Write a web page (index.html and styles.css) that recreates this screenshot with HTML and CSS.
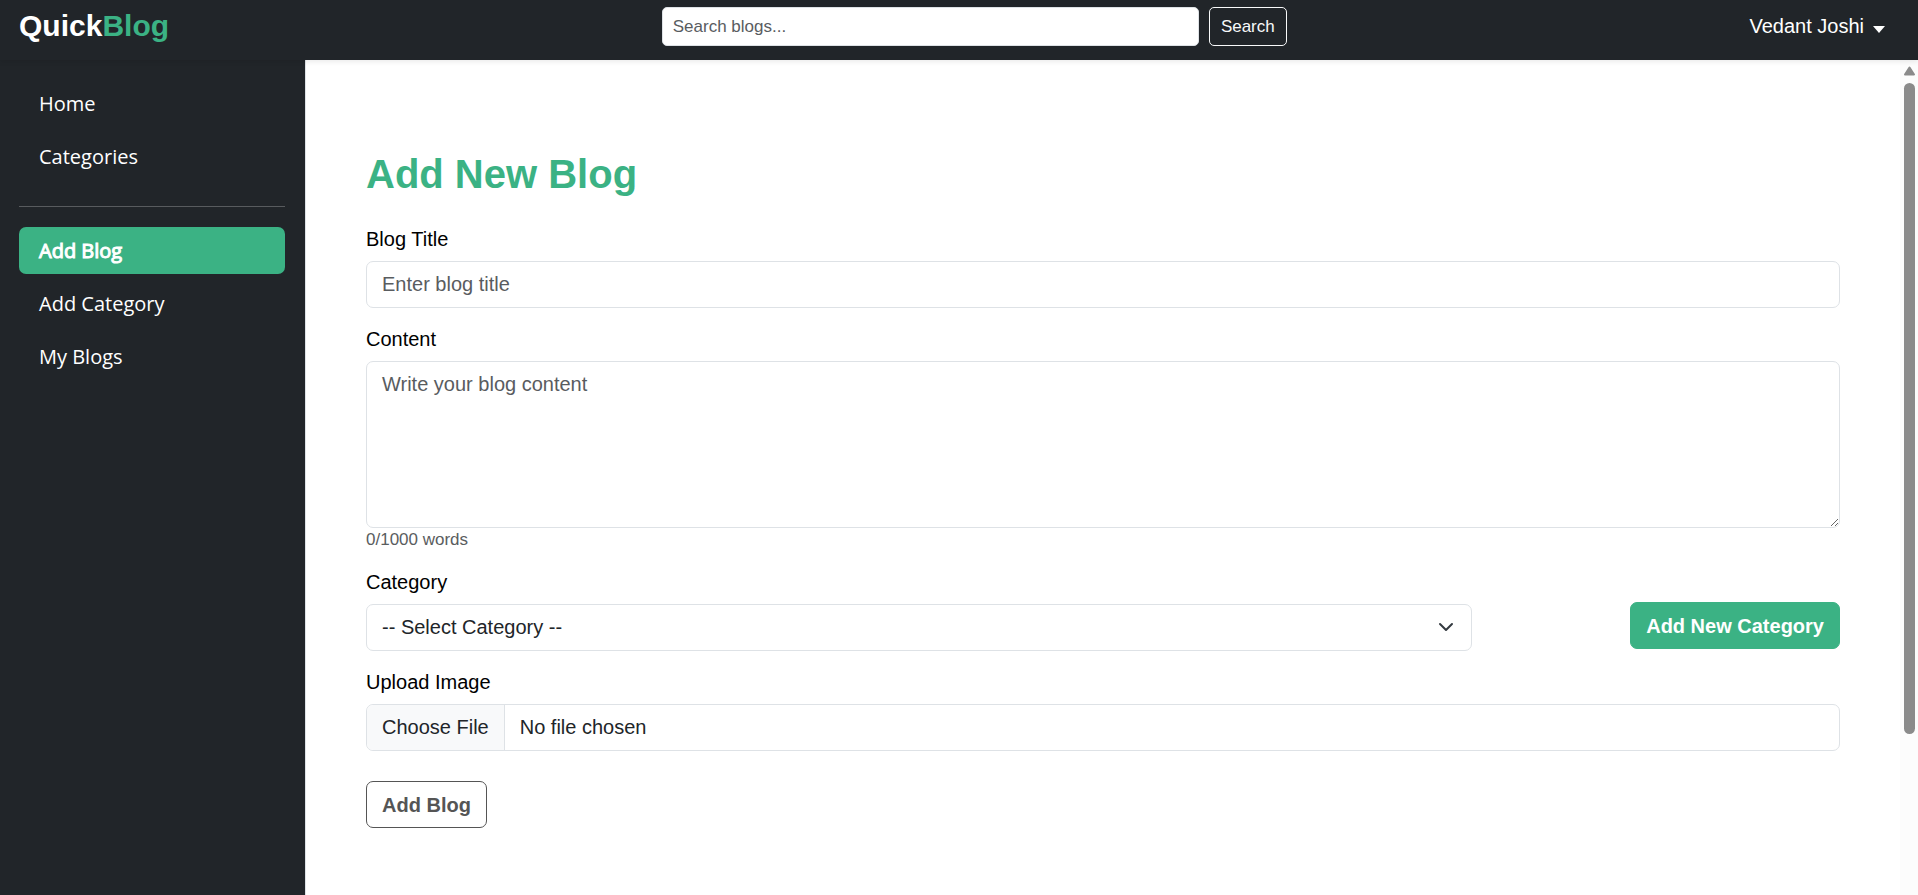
FILE: index.html
```html
<!DOCTYPE html>
<html lang="en">
<head>
<meta charset="utf-8">
<meta name="viewport" content="width=device-width, initial-scale=1">
<title>QuickBlog</title>
<link rel="stylesheet" href="styles.css">
</head>
<body>
<header class="topbar">
  <a class="brand" href="#">Quick<span class="brand-accent">Blog</span></a>
  <form class="search" role="search">
    <input class="search-input" type="search" placeholder="Search blogs..." aria-label="Search blogs">
    <button class="search-button" type="submit">Search</button>
  </form>
  <button class="user-menu" type="button">Vedant Joshi<span class="caret"></span></button>
</header>
<div class="shell">
  <nav class="sidebar">
    <a class="nav-link" href="#">Home</a>
    <a class="nav-link" href="#">Categories</a>
    <hr class="divider">
    <a class="nav-link active" href="#" aria-current="page">Add Blog</a>
    <a class="nav-link" href="#">Add Category</a>
    <a class="nav-link" href="#">My Blogs</a>
  </nav>
  <main class="content">
    <h1 class="title">Add New Blog</h1>
    <form>
      <div class="field">
        <label class="label" for="blog-title">Blog Title</label>
        <input class="control" id="blog-title" type="text" placeholder="Enter blog title">
      </div>
      <div class="field">
        <label class="label" for="blog-content">Content</label>
        <textarea class="control area" id="blog-content" rows="5" placeholder="Write your blog content"></textarea>
        <small class="hint">0/1000 words</small>
      </div>
      <div class="field category-row">
        <div class="category">
          <label class="label" for="category">Category</label>
          <div class="select-wrap">
            <select class="control select" id="category">
              <option>-- Select Category --</option>
            </select>
            <svg class="chevron" viewBox="0 0 16 16" aria-hidden="true"><path d="m2 5 6 6 6-6"/></svg>
          </div>
        </div>
        <button class="button primary" type="button">Add New Category</button>
      </div>
      <div class="field">
        <label class="label" for="image">Upload Image</label>
        <input class="control file" id="image" type="file">
      </div>
      <button class="button outline" type="submit">Add Blog</button>
    </form>
  </main>
  <div class="scrollbar" aria-hidden="true">
    <svg class="scroll-arrow" viewBox="0 0 12 10"><path d="M6 1.5 10.5 8.5h-9z"/></svg>
    <div class="scroll-thumb"></div>
  </div>
</div>
</body>
</html>
```

FILE: styles.css
```css
* { box-sizing: border-box; }

body {
  display: flex;
  flex-direction: column;
  height: 100vh;
  margin: 0;
  overflow: hidden;
  background: #fff;
  color: #000;
  font: 20px/30px "Liberation Sans", Arial, sans-serif;
}

button, input, select, textarea { font: inherit; }
a { text-decoration: none; }

.topbar {
  position: relative;
  z-index: 1;
  display: flex;
  flex: none;
  align-items: center;
  justify-content: space-between;
  height: 60px;
  padding: 0 33px 7px 19px;
  background: #212529;
  box-shadow: 0 2px 5px rgba(0, 0, 0, 0.08);
}

.brand, .user-menu { margin-bottom: 2px; }
.brand {
  margin-right: 30px;
  color: #fff;
  font-size: 30px;
  font-weight: 700;
}
.brand-accent { color: #3bb284; }

.search {
  display: flex;
  flex: 0 1 625px;
  gap: 10px;
}
.search-input {
  flex: 1;
  min-width: 0;
  height: 39px;
  padding: 0 10px;
  border: 1px solid #dee2e6;
  border-radius: 5px;
  background: #fff;
  color: #212529;
  font-size: 17px;
  outline: 0;
  appearance: none;
}
.search-input::placeholder, .control::placeholder { color: #595c5f; opacity: 1; }
.search-button {
  height: 39px;
  padding: 0 11px;
  border: 1px solid #f8f9fa;
  border-radius: 5px;
  background: transparent;
  color: #f8f9fa;
  font-size: 17px;
}

.user-menu {
  display: flex;
  align-items: center;
  gap: 9px;
  padding: 0;
  border: 0;
  background: none;
  color: #fff;
}
.caret {
  margin-top: 8px;
  border: 6px solid transparent;
  border-top: 7px solid #fff;
  border-bottom: 0;
}

.shell {
  display: flex;
  flex: 1;
  min-height: 0;
}

.sidebar {
  display: flex;
  flex: 0 0 306px;
  flex-direction: column;
  gap: 6px;
  padding: 20px 20px 20px 19px;
  border-right: 1px solid #dee2e6;
  background: #212529;
  font-family: "Open Sans", "Noto Sans", sans-serif;
}
.nav-link {
  padding: 10px 20px;
  border-radius: 7px;
  color: #fff;
  line-height: 27px;
}
.nav-link.active {
  background: #3bb284;
  -webkit-text-stroke: 1px #fff;
}
.divider {
  width: 100%;
  margin: 20px 0 14px;
  border: 0;
  border-top: 1px solid #585b5e;
}

.content {
  flex: 1;
  min-width: 0;
  padding: 90px 60px 60px;
}
.title {
  margin: 0 0 26px;
  color: #3bb284;
  font-size: 40px;
  line-height: 48px;
}

.field { margin-bottom: 16px; }
.label {
  display: block;
  margin-bottom: 7px;
}
.control {
  display: block;
  width: 100%;
  height: 47px;
  padding: 7px 15px;
  border: 1px solid #dee2e6;
  border-radius: 7px;
  background: #fff;
  color: #212529;
  outline: 0;
}
.area {
  height: 167px;
  resize: vertical;
}
.hint {
  display: block;
  color: #5a5d60;
  font-size: 17px;
  line-height: 23px;
}

.category-row {
  display: flex;
  align-items: flex-end;
  justify-content: space-between;
}
.category { width: 75%; }
.select-wrap { position: relative; }
.select {
  padding-top: 6px;
  padding-bottom: 8px;
  appearance: none;
}
.chevron {
  position: absolute;
  top: 15px;
  right: 18px;
  width: 16px;
  height: 16px;
  fill: none;
  stroke: #343a40;
  stroke-width: 2;
  stroke-linecap: round;
  stroke-linejoin: round;
  pointer-events: none;
}

.file {
  padding: 6px 15px 8px 0;
  line-height: 30px;
}
.file::file-selector-button {
  height: 45px;
  margin: -6px 15px -8px 0;
  padding: 0 15px 2px;
  border: 0;
  border-right: 1px solid #dee2e6;
  border-radius: 6px 0 0 6px;
  background: #f8f9fa;
  color: #212529;
  font: inherit;
}

.button {
  height: 47px;
  padding: 0 15px;
  border: 1px solid;
  border-radius: 7px;
  font-weight: 700;
}
.primary {
  margin-bottom: 2px;
  border-color: #3bb284;
  background: #3bb284;
  color: #fff;
}
.outline {
  margin-top: 14px;
  border-color: #555;
  background: #fff;
  color: #555;
}

.scrollbar {
  display: flex;
  flex: 0 0 18px;
  flex-direction: column;
  align-items: center;
  gap: 7px;
  padding: 6px 0 161px 1px;
  background: #fcfcfc;
}
.scroll-arrow {
  flex: none;
  width: 13px;
  height: 10px;
  fill: #8b8b8b;
  stroke: #8b8b8b;
  stroke-width: 2;
  stroke-linejoin: round;
}
.scroll-thumb {
  flex: 1;
  width: 11px;
  border-radius: 6px;
  background: #8b8b8b;
}
```
